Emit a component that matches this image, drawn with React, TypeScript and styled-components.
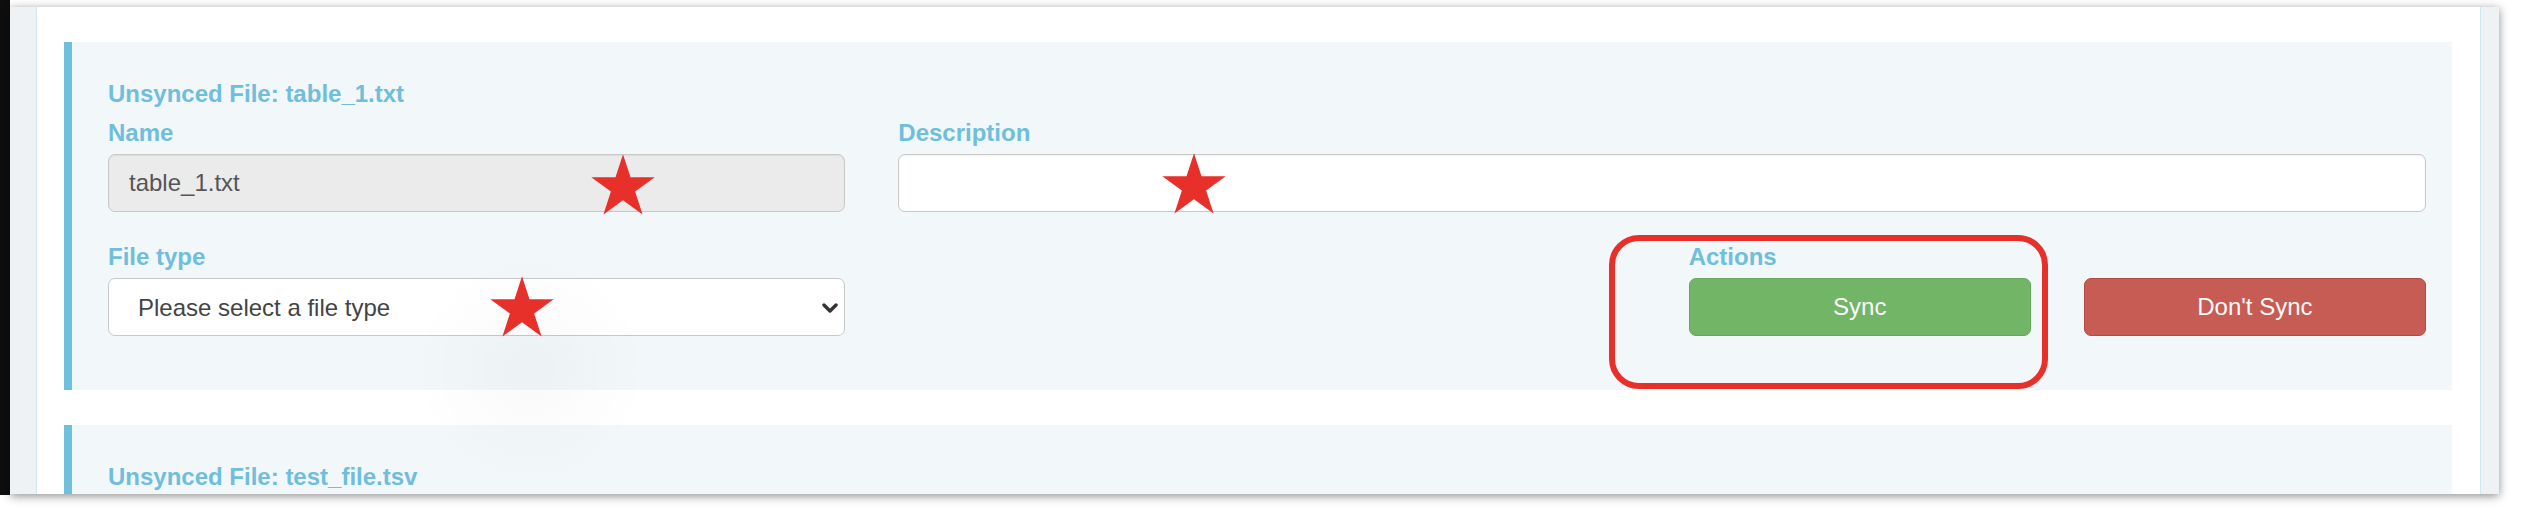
import styled, { createGlobalStyle } from "styled-components";

const GlobalStyle = createGlobalStyle`
	html,
	body {
		margin: 0;
		padding: 0;
		background: #fff;
	}
	body {
		font-family: "Liberation Sans", Arial, sans-serif;
	}
	* {
		box-sizing: border-box;
	}
`;

// the second card only peeks in at the bottom of the window
const unsyncedFiles = [
	{ file: "table_1.txt", open: true },
	{ file: "test_file.tsv", open: false },
];

// red stars drawn over the screenshot, page pixels
const stars = [
	{ left: 591, top: 154 },
	{ left: 1162, top: 153 },
	{ left: 490, top: 276 },
];

function Star() {
	return (
		<svg width="64" height="61" viewBox="2 0 96 91">
			<polygon
				points="50,0 61.23,34.55 97.55,34.55 68.17,55.9 79.39,90.45 50,69.1 20.61,90.45 31.83,55.9 2.45,34.55 38.77,34.55"
				fill="#e8302a"
			/>
		</svg>
	);
}

function UnsyncedFileCard({ file, open }: { file: string; open: boolean }) {
	return (
		<Card>
			<CardTitle>Unsynced File: {file}</CardTitle>
			{open && (
				<>
					<FormRow>
						<Field $start={1} $span={4}>
							<Label>Name</Label>
							<TextInput type="text" value={file} disabled readOnly />
						</Field>
						<Field $start={5} $span={8}>
							<Label>Description</Label>
							<TextInput type="text" defaultValue="" />
						</Field>
					</FormRow>
					<FormRow>
						<Field $start={1} $span={4}>
							<Label>File type</Label>
							<SelectWrap>
								<Select defaultValue="">
									<option value="">Please select a file type</option>
								</Select>
								<Chevron width="16" height="10" viewBox="0 0 16 10">
									<path
										d="M2 2 L8 8 L14 2"
										fill="none"
										stroke="#333"
										strokeWidth="3.4"
										strokeLinecap="round"
										strokeLinejoin="round"
									/>
								</Chevron>
							</SelectWrap>
						</Field>
						<Field $start={9} $span={2}>
							<Label>Actions</Label>
							<ActionButton $variant="success">Sync</ActionButton>
						</Field>
						<Field $start={11} $span={2} $bottom>
							<ActionButton $variant="danger">Don't Sync</ActionButton>
						</Field>
					</FormRow>
				</>
			)}
		</Card>
	);
}

function App() {
	return (
		<>
			<GlobalStyle />
			<Desktop>
				<BackdropStrip />
				<Window>
					<Gutter $side="left" />
					<Content>
						{unsyncedFiles.map(f => (
							<UnsyncedFileCard key={f.file} file={f.file} open={f.open} />
						))}
					</Content>
					<Gutter $side="right" />
				</Window>
				<Smudge />
				{stars.map((s, i) => (
					<StarMark key={i} style={{ left: s.left, top: s.top }}>
						<Star />
					</StarMark>
				))}
				<Highlight />
			</Desktop>
		</>
	);
}

const labelColor = "#6fbedc";

const Desktop = styled.div`
	position: relative;
	width: 2524px;
	height: 522px;
	display: flex;
	align-items: flex-start;
	overflow: hidden;
	background: #fff;
`;

const BackdropStrip = styled.div`
	width: 10px;
	height: 495px;
	background: #0e0e0e;
	flex-shrink: 0;
`;

const Window = styled.div`
	margin-top: 7px;
	width: 2489px;
	height: 487px;
	display: flex;
	flex-shrink: 0;
	overflow: hidden;
	box-shadow: 0 2px 9px rgba(0, 0, 0, 0.45);
`;

const Gutter = styled.div<{ $side: "left" | "right" }>`
	width: ${p => (p.$side === "left" ? "27px" : "19px")};
	flex-shrink: 0;
	background: #eef2f5;
	${p =>
		p.$side === "left"
			? "border-right: 1px solid #cfe7f0;"
			: "border-left: 1px solid #cfe7f0;"}
`;

const Content = styled.div`
	flex: 1;
	background: #fff;
	padding: 35px 28px 0 27px;
	overflow: hidden;
`;

const Card = styled.div`
	background: #f2f7fa;
	border-left: 8px solid #70bfdc;
	padding: 35px 26px 54px 36px;
	& + & {
		margin-top: 35px;
	}
`;

const CardTitle = styled.h4`
	margin: 0 0 5px;
	font-size: 24px;
	line-height: 34px;
	font-weight: bold;
	color: ${labelColor};
`;

const FormRow = styled.div`
	display: grid;
	grid-template-columns: repeat(12, minmax(0, 1fr));
	column-gap: 53px;
	& + & {
		margin-top: 28px;
	}
`;

const Field = styled.div<{ $start: number; $span: number; $bottom?: boolean }>`
	grid-column: ${p => p.$start} / span ${p => p.$span};
	display: flex;
	flex-direction: column;
	align-self: ${p => (p.$bottom ? "end" : "stretch")};
`;

const Label = styled.label`
	font-size: 24px;
	line-height: 34px;
	font-weight: bold;
	color: ${labelColor};
	margin-bottom: 4px;
`;

const TextInput = styled.input`
	height: 58px;
	width: 100%;
	padding: 0 20px;
	border: 1.5px solid #c8c8c8;
	border-radius: 7px;
	font-family: inherit;
	font-size: 24px;
	color: #555;
	background: #fff;
	box-shadow: inset 0 1px 2px rgba(0, 0, 0, 0.06);
	outline: none;
	&:disabled {
		background: #ebebeb;
		color: #555;
		-webkit-text-fill-color: #555;
		opacity: 1;
	}
`;

const SelectWrap = styled.div`
	position: relative;
`;

const Select = styled.select`
	appearance: none;
	-webkit-appearance: none;
	height: 58px;
	width: 100%;
	padding: 0 40px 0 29px;
	border: 1.5px solid #c8c8c8;
	border-radius: 7px;
	font-family: inherit;
	font-size: 24px;
	color: #444;
	background: #fff;
	outline: none;
`;

const Chevron = styled.svg`
	position: absolute;
	right: 7px;
	top: 25px;
	pointer-events: none;
`;

const ActionButton = styled.button<{ $variant: "success" | "danger" }>`
	height: 58px;
	width: 100%;
	border-radius: 7px;
	font-family: inherit;
	font-size: 24px;
	color: #fbfbfb;
	cursor: pointer;
	background: ${p => (p.$variant === "success" ? "#72b566" : "#c75c54")};
	border: 1.5px solid ${p => (p.$variant === "success" ? "#65a85a" : "#b64a43")};
`;

const StarMark = styled.div`
	position: absolute;
	width: 64px;
	height: 61px;
	pointer-events: none;
	svg {
		display: block;
	}
`;

const Highlight = styled.div`
	position: absolute;
	left: 1609px;
	top: 235px;
	width: 439px;
	height: 154px;
	border: 6px solid #e8302a;
	border-radius: 30px;
	pointer-events: none;
`;

const Smudge = styled.div`
	position: absolute;
	left: 410px;
	top: 250px;
	width: 240px;
	height: 240px;
	border-radius: 50%;
	background: radial-gradient(circle, rgba(0, 0, 0, 0.025), rgba(0, 0, 0, 0) 70%);
	pointer-events: none;
`;

export default App;
